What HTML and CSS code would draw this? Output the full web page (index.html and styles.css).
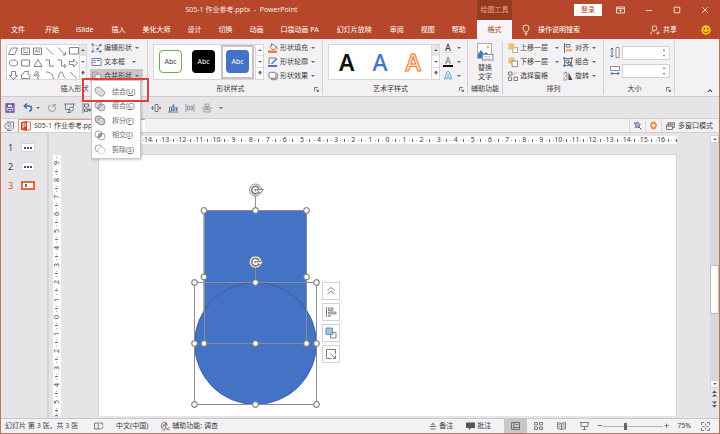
FILE: index.html
```html
<!DOCTYPE html>
<html lang="zh-CN">
<head>
<meta charset="utf-8">
<title>S05-1 作业参考.pptx - PowerPoint</title>
<link rel="stylesheet" href="styles.css">
</head>
<body>
<div class="window">
  <header class="titlebar">
    <div class="doc-title">S05-1 作业参考.pptx &nbsp;-&nbsp; PowerPoint</div>
    <div class="context-title">绘图工具</div>
    <div class="window-tools">
      <button class="login">登录</button>
      <button class="win-btn" aria-label="功能区显示选项"><svg width="9" height="8" viewBox="0 0 9 8"><path d="M.5 1h8v6h-8zM.5 2.7h8M4.500 6V4M3.300 5l1.200-1.200L5.700 5" class="w"/></svg></button>
      <button class="win-btn" aria-label="最小化"><svg width="8" height="8" viewBox="0 0 8 8"><path d="M1 4.500h6" class="w"/></svg></button>
      <button class="win-btn" aria-label="最大化"><svg width="8" height="8" viewBox="0 0 8 8"><path d="M1.200 1.200h5.600v5.600H1.200z" class="w"/></svg></button>
      <button class="win-btn" aria-label="关闭"><svg width="8" height="8" viewBox="0 0 8 8"><path d="M1 1l6 6M7 1L1 7" class="w"/></svg></button>
    </div>
  </header>

  <nav class="tabs">
    <div class="tab-list">
      <a href="#" class="file">文件</a><a href="#">开始</a><a href="#" class="latin">iSlide</a><a href="#">插入</a><a href="#">美化大师</a><a href="#">设计</a><a href="#">切换</a><a href="#">动画</a><a href="#" class="latin">口袋动画 PA</a><a href="#" class="latin">幻灯片放映</a><a href="#">审阅</a><a href="#">视图</a><a href="#">帮助</a>
    </div>
    <a href="#" class="active">格式</a>
    <div class="tab-tools">
      <button class="tell"><svg width="8" height="12" viewBox="0 0 8 12"><path d="M2.500 8C2.500 6.500 1 6 1 4a3 3 0 0 1 6 0c0 2-1.500 2.500-1.500 4zM2.700 9.500h2.600M3 11h2" class="w"/></svg>操作说明搜索</button>
      <button class="share"><svg width="10" height="10" viewBox="0 0 10 10"><circle cx="4.500" cy="3.200" r="2.400" class="w"/><path d="M.8 9.500c0-2.400 1.400-3.700 3.400-3.700M6.500 8h3M8 6.500v3" class="w"/></svg>共享</button>
      <svg class="smile" width="10" height="10" viewBox="0 0 10 10"><circle cx="5" cy="5" r="4.700" fill="#f7c60b"/><circle cx="3.300" cy="3.700" r=".8" fill="#5a3b12"/><circle cx="6.700" cy="3.700" r=".8" fill="#5a3b12"/><path d="M2.300 5.800c1 2.400 4.400 2.400 5.400 0" fill="none" stroke="#5a3b12" stroke-width=".8"/></svg>
    </div>
  </nav>

  <section class="ribbon">
    <div class="group g-insert">
      <div class="body">
        <div class="gallery shapes">
          <svg width="73" height="36" viewBox="0 0 73 36" class="shape-icons">
            <path d="M4.500 4h6l-3 6.500h-6zM14.500 4h8v6.500h-8zM26.500 4h8v6.500h-8zM39 3.500l7 7M51 3.500l7 7M58.500 8v3h-3M62.500 3.500h9v6.500h-9z"/>
            <path d="M16 6h2M16 8.500h5M19.500 6h1.500M31 6h2M31 8h2M28 8.500L29.500 5.500 30.500 8.500" class="blue"/>
            <ellipse cx="6.500" cy="19" rx="4.200" ry="3"/>
            <path d="M14.500 16h8v6h-8zM31 15.500l4 7h-8zM38.500 16h4v6h4.500M50.500 16h4v6h4.500M57 20l2 2-2 2M62.500 17.500h4V15l4 4-4 4v-2.500h-4z"/>
            <path d="M4.500 27.500h4v4h2L6.500 35.500 2.500 31.500h2zM14.500 34.500v-4l2-1 1-2h4c1 1-2 2-.500 3 2 0 2.500 1 1.500 4zM28 28c4-1 5 2 1 2s-2 3 1 1.500 3 1 0 2l2 1.500M39 28c5 0 7 3 7.500 7M50.500 34c2 0 1-6 3.500-6s2 6 4.500 6M63 28l7 6.500"/>
          </svg>
        </div>
        <div class="scroller"><button aria-label="上一行" disabled><i class="up"></i></button><button aria-label="下一行"><i class="dn"></i></button><button aria-label="更多形状"><i class="dn more"></i></button></div>
        <div class="rows">
          <button class="cmd"><svg width="11" height="10" viewBox="0 0 11 10"><path d="M2 2l7 1-2 3 2 3-7-1z" fill="none" stroke="#777" stroke-width=".7" stroke-dasharray="1.500 1"/><path d="M.5.5h2v2h-2zM8.500 1h2v2h-2zM.5 7.500h2v2h-2zM8.500 7.500h2v2h-2zM5.500 5h2v2h-2z" fill="#3d78b8"/></svg>编辑形状<i class="dn"></i></button>
          <button class="cmd"><svg width="11" height="10" viewBox="0 0 11 10"><path d="M1 1.500h9v7H1z" class="k" fill="#fff"/><path d="M2.500 3.500h2M2.500 5.500h2M6 3.500h2.500" stroke="#2f6fb2"/></svg>文本框<i class="dn wide"></i></button>
          <button class="cmd pressed"><svg width="11" height="10" viewBox="0 0 11 10"><circle cx="4.200" cy="4" r="3.200" class="g"/><circle cx="7" cy="6.200" r="3.200" class="g" fill="#eee"/></svg>合并形状<i class="dn"></i></button>
        </div>
      </div>
      <div class="caption">插入形状</div>
    </div>

    <div class="group g-style">
      <div class="body">
        <div class="gallery styles">
          <button class="swatch line">Abc</button><button class="swatch black">Abc</button><span class="frame"><button class="swatch blue">Abc</button></span>
        </div>
        <div class="scroller"><button aria-label="上一行"><i class="up"></i></button><button aria-label="下一行"><i class="dn"></i></button><button aria-label="更多样式"><i class="dn more"></i></button></div>
        <div class="rows">
          <button class="cmd"><svg width="10" height="10" viewBox="0 0 10 10"><path d="M2 3.500L5 1l3.500 3L5 7z" class="k" fill="#fff"/><path d="M3.500 3V.5M8 3.500c1 1 1.500 2 1 3" class="k"/><path d="M0 7.500h9v2.500H0z" fill="#ed7d31"/></svg>形状填充<i class="dn"></i></button>
          <button class="cmd"><svg width="10" height="10" viewBox="0 0 10 10"><path d="M1 7V1h7" class="k"/><path d="M3 6.500L8.500 1l1 1L4 7.200z" fill="#3d78c8"/><path d="M0 8h9v2H0z" fill="#4472c4"/></svg>形状轮廓<i class="dn"></i></button>
          <button class="cmd"><svg width="10" height="10" viewBox="0 0 10 10"><path d="M3 8.500h5L9.500 7V2.500" fill="none" stroke="#999" stroke-width="1.400"/><rect x="1" y="1.300" width="7" height="6" rx="1.500" fill="#fff" stroke="#666" stroke-width=".9"/></svg>形状效果<i class="dn"></i></button>
        </div>
      </div>
      <div class="caption">形状样式<button class="launch" aria-label="设置形状格式"><svg width="5" height="5" viewBox="0 0 5 5"><path d="M.5 4V.5H4M2 2l2.500 2.500M4.500 2.500v2h-2" class="k"/></svg></button></div>
    </div>

    <div class="group g-art">
      <div class="body">
        <div class="gallery arts">
          <button class="art">A</button><button class="art art-blue">A</button><button class="art art-orange">A</button>
        </div>
        <div class="scroller"><button aria-label="上一行" disabled><i class="up"></i></button><button aria-label="下一行"><i class="dn"></i></button><button aria-label="更多艺术字"><i class="dn more"></i></button></div>
        <div class="rows">
          <button class="cmd letter" aria-label="文本填充"><b class="fill">A</b><i class="dn"></i></button>
          <button class="cmd letter" aria-label="文本轮廓"><b class="outline">A</b><i class="dn"></i></button>
          <button class="cmd letter" aria-label="文本效果"><b class="effect">A</b><i class="dn"></i></button>
        </div>
      </div>
      <div class="caption">艺术字样式<button class="launch" aria-label="设置文本效果"><svg width="5" height="5" viewBox="0 0 5 5"><path d="M.5 4V.5H4M2 2l2.500 2.500M4.500 2.500v2h-2" class="k"/></svg></button></div>
    </div>

    <div class="group g-alt">
      <div class="body">
        <button class="big"><svg width="18" height="18" viewBox="0 0 18 18"><rect x="1.500" y=".5" width="14" height="15" fill="#fff" stroke="#aaa"/><circle cx="12" cy="4" r="1.600" fill="#f0c070"/><path d="M2 15V11l3-4 3 4 2-2 3 3v3z" fill="#3d7cc0"/><rect x="6.500" y="11.500" width="10.500" height="5.500" fill="#fff" stroke="#888"/><path d="M8 13.500h7M8 15.200h7" stroke="#aaa" stroke-width=".6"/></svg>替换<br>文字</button>
      </div>
      <div class="caption">辅助功能</div>
    </div>

    <div class="group g-arrange">
      <div class="body">
        <div class="rows">
          <button class="cmd"><svg width="10" height="10" viewBox="0 0 10 10"><path d="M4.500 4.500h5v5h-5z" fill="#fff" stroke="#999" stroke-width=".8"/><path d="M.5.5h6v6h-6z" fill="#f0c074"/></svg>上移一层<i class="dn wide"></i></button>
          <button class="cmd"><svg width="10" height="10" viewBox="0 0 10 10"><path d="M.5.5h6v6h-6z" fill="#f0c074"/><path d="M4 4h5.500v5.500H4z" fill="#fff" stroke="#777" stroke-width=".8"/></svg>下移一层<i class="dn wide"></i></button>
          <button class="cmd"><svg width="10" height="10" viewBox="0 0 10 10"><path d="M.5 1h3.500v3H.5zM6 6h3.500v3.500H6zM.5 6h3v3.500h-3z" class="k"/><path d="M5 4.500L8.500 1l1 1M4.500 7.500L2 5" fill="none" stroke="#e0a850"/></svg>选择窗格</button>
        </div>
        <div class="rows">
          <button class="cmd"><svg width="10" height="10" viewBox="0 0 10 10"><path d="M1.500 0v10" stroke="#3d78b8"/><path d="M3 1.500h4v2.500H3z" class="k"/><path d="M3 6h6v2.500H3z" fill="#f0b464"/></svg>对齐<i class="dn"></i></button>
          <button class="cmd"><svg width="10" height="10" viewBox="0 0 10 10"><path d="M1.500 1.500h7v7h-7zM3 3h3v3H3zM5 5h2.500v2.500H5z" class="k"/><path d="M.3.300h2v2h-2zM7.700.300h2v2h-2zM.3 7.700h2v2h-2zM7.700 7.700h2v2h-2z" fill="#3d78b8"/></svg>组合<i class="dn"></i></button>
          <button class="cmd"><svg width="10" height="10" viewBox="0 0 10 10"><path d="M5.500 1.500v7.500h4z" fill="#444"/><path d="M4 9H.5L4 2.500z" class="g"/><path d="M1 3.500c0-2 1.500-2.700 3-2" fill="none" stroke="#3d78b8"/></svg>旋转<i class="dn"></i></button>
        </div>
      </div>
      <div class="caption">排列</div>
    </div>

    <div class="group g-size">
      <div class="body">
        <label class="size"><svg width="10" height="11" viewBox="0 0 10 11"><path d="M2 1v9M.5 2.500L2 1l1.500 1.500M.5 8.500L2 10l1.500-1.500" stroke="#3d78b8" fill="none"/><path d="M6 .5h3v10H6z" fill="#fff" stroke="#777" stroke-width=".8"/></svg><input type="text" aria-label="高度"><span class="spin"><i class="up"></i><i class="dn"></i></span></label>
        <label class="size"><svg width="10" height="11" viewBox="0 0 10 11"><path d="M1 8.500h8M2.500 7L1 8.500 2.500 10M7.500 7L9 8.500 7.500 10" stroke="#3d78b8" fill="none"/><path d="M.5 1.500h9v4h-9z" fill="#fff" stroke="#777" stroke-width=".8"/></svg><input type="text" aria-label="宽度"><span class="spin"><i class="up"></i><i class="dn"></i></span></label>
      </div>
      <div class="caption">大小<button class="launch" aria-label="大小和位置"><svg width="5" height="5" viewBox="0 0 5 5"><path d="M.5 4V.5H4M2 2l2.500 2.500M4.500 2.500v2h-2" class="k"/></svg></button></div>
    </div>
    <button class="collapse" aria-label="折叠功能区"><svg width="6" height="5" viewBox="0 0 6 5"><path d="M1 4l2-2.200L5 4" fill="none" stroke="#444" stroke-width="1.100"/></svg></button>
  </section>

  <div class="quick">
    <button aria-label="保存"><svg width="10" height="10" viewBox="0 0 10 10"><path d="M1 1h8v8H1z" fill="none" stroke="#6b4a9a" stroke-width="1.300"/><path d="M2.500 1v3.500h5V1M3 9V6.500h4V9" fill="none" stroke="#6b4a9a"/></svg></button>
    <button class="undo" aria-label="撤消"><svg width="10" height="9" viewBox="0 0 10 9"><path d="M1.500 3h4.500c3.500 0 3.500 5 0 5M4 .5L1.300 3 4 5.500" fill="none" stroke="#3a6fa8" stroke-width="1.500"/></svg><i class="dn"></i></button>
    <button aria-label="恢复"><svg width="10" height="10" viewBox="0 0 10 10"><path d="M3.500 1.800a3.500 3.500 0 1 0 3 0M6 4.200V1.500h3" fill="none" stroke="#aaa" stroke-width="1.200"/></svg></button>
    <button aria-label="从头开始"><svg width="11" height="10" viewBox="0 0 11 10"><path d="M0 1h11M1.500 1v5.500h4M9.500 1v3M3 9.500h4M5 6.500v3" class="k"/><circle cx="7.500" cy="6" r="2" fill="#eee" stroke="#4b83b4"/></svg></button>
    <button class="last" aria-label="对齐对象"><svg width="9" height="10" viewBox="0 0 9 10"><path d="M1 0v10M2.500 1h4v3h-4zM2.500 6h3v2.500h-3zM5 7h3.500" class="k"/><path d="M5 6.500L8.500 5v4z" fill="#3d78b8"/></svg></button>
    <button aria-label="水平居中"><svg width="10" height="10" viewBox="0 0 10 10"><path d="M4 1.500h3v7H4zM0 5h3M8 5h2M1.500 3v4M9 3.500v3" class="k"/></svg></button>
    <button aria-label="底端对齐"><svg width="10" height="10" viewBox="0 0 10 10"><path d="M0 9h10M1.500 4h2v4h-2z" class="k"/><path d="M4.500 1.500h2V8h-2zM7.500 4h2v4h-2z" fill="#4f86bd"/></svg></button>
    <button aria-label="横向分布"><svg width="10" height="10" viewBox="0 0 10 10"><path d="M1 1v8M9 1v8M2.500 3h2v4h-2zM6 3h1.500v4H6z" class="g"/></svg></button>
    <button aria-label="纵向分布"><svg width="10" height="10" viewBox="0 0 10 10"><path d="M0 5h10M3 1h4v2.500H3zM2 6.500h6V9H2zM5 3.500v3" class="g"/></svg></button>
    <button aria-label="自定义快速访问工具栏"><i class="dn"></i></button>
  </div>

  <div class="docbar">
    <button class="history" aria-label="文档"><svg width="11" height="10" viewBox="0 0 11 10"><path d="M3 1h6.500v6L7 9.500H3" class="k"/><circle cx="4" cy="5" r="3.200" fill="#f3f1f4" stroke="#777" stroke-width=".8"/><path d="M4 3v2.200h1.700" class="k"/></svg></button>
    <a href="#" class="doc"><svg width="10" height="10" viewBox="0 0 10 10"><path d="M5 1h4.500v8H5z" fill="#fff" stroke="#c8502f" stroke-width=".8"/><path d="M0 1l6-1v10L0 9z" fill="#d04423"/><path d="M2 7.500v-5h1.300c1.800 0 1.800 2.700 0 2.700H2" fill="none" stroke="#fff" stroke-width=".9"/></svg>S05-1 作业参考.pptx</a>
    <div class="doc-tools">
      <button aria-label="魔法棒"><svg width="9" height="9" viewBox="0 0 9 9"><path d="M1.500 1.500l2 .5L5 .8l.5 2 2 .7-1.500 1.500.3 1.800-2-.8-2 .8.3-2z" fill="#b8a8e0" stroke="#6954a8" stroke-width=".8"/><path d="M5.500 5.500l3 3" stroke="#555"/></svg></button>
      <button aria-label="设置"><svg width="9" height="9" viewBox="0 0 9 9"><path d="M2.700.8h3.600l1.900 3.700-1.900 3.700H2.700L.8 4.500z" fill="#ec8c3c"/><circle cx="4.500" cy="4.500" r="1.700" fill="#f3f1f4"/></svg></button>
      <button class="multi"><svg width="9" height="8" viewBox="0 0 9 8"><path d="M.5 3h6v4.500h-6zM.5 4.200h6M2 3V.8h6.500V5.500h-2M2 2h6.500" class="k"/></svg>多窗口模式</button>
    </div>
  </div>

  <main class="work">
    <ol class="thumbs">
      <li><span>1</span><a href="#" class="thumb" aria-label="幻灯片 1"><i></i><i></i><i></i></a></li>
      <li><span>2</span><a href="#" class="thumb" aria-label="幻灯片 2"><i></i><i></i><i></i></a></li>
      <li class="sel"><span>3</span><a href="#" class="thumb" aria-label="幻灯片 3"><i></i></a></li>
    </ol>
    <div class="vruler"><span>9</span><span>8</span><span>7</span><span>6</span><span>5</span><span>4</span><span>3</span><span>2</span><span>1</span><span>0</span><span>1</span><span>2</span><span>3</span><span>4</span><span>5</span><span class="end"></span></div>
    <div class="stage">
      <div class="hruler"><span class="end"></span><span></span><span></span><span>14</span><span>13</span><span>12</span><span>11</span><span>10</span><span>9</span><span>8</span><span>7</span><span>6</span><span>5</span><span>4</span><span>3</span><span>2</span><span>1</span><span>0</span><span>1</span><span>2</span><span>3</span><span>4</span><span>5</span><span>6</span><span>7</span><span>8</span><span>9</span><span>10</span><span>11</span><span>12</span><span>13</span><span>14</span><span>15</span><span>16</span><span class="end"></span></div>
      <div class="slide">
        <svg class="drawing" width="240" height="262" viewBox="99 155 240 262">
          <defs>
            <g id="rot"><circle r="6" fill="#fff" stroke="#8a8a8a"/><path d="M3.400 1.800A3.800 3.800 0 1 1 3.600-1.200" fill="none" stroke="#777" stroke-width="1.600"/><path d="M1.500-.5H8L4.800 3.300z" fill="#fff" stroke="#777" stroke-width=".9"/><circle r="1.200" fill="#888"/></g>
            <circle id="h" r="2.800" fill="#fff" stroke="#85858a" stroke-width="1.200"/>
          </defs>
          <rect x="204" y="210.500" width="102.500" height="132.500" fill="#4472c4" stroke="#2f528f" stroke-width=".8"/>
          <circle cx="255.500" cy="343.500" r="61" fill="#4472c4" stroke="#34599c" stroke-width=".8"/>
          <g fill="none" stroke="#8c8c94"><rect x="204.500" y="210.500" width="102" height="133"/><rect x="194.500" y="282.500" width="122" height="122"/><path d="M255.500 196v12M255.500 268v12"/></g>
          <use href="#rot" x="255.500" y="190"/><use href="#rot" x="255.500" y="262"/>
          <use href="#h" x="204" y="210.500"/><use href="#h" x="255.500" y="210.500"/><use href="#h" x="306.500" y="210.500"/>
          <use href="#h" x="204" y="277"/><use href="#h" x="306.500" y="277"/>
          <use href="#h" x="204" y="343.500"/><use href="#h" x="255.500" y="343.500"/><use href="#h" x="306.500" y="343.500"/>
          <use href="#h" x="194.500" y="282.500"/><use href="#h" x="255.500" y="282.500"/><use href="#h" x="316.500" y="282.500"/>
          <use href="#h" x="194.500" y="343.500"/><use href="#h" x="316.500" y="343.500"/>
          <use href="#h" x="194.500" y="404.500"/><use href="#h" x="255.500" y="404.500"/><use href="#h" x="316.500" y="404.500"/>
        </svg>
        <div class="mini">
          <button aria-label="收起"><svg width="10" height="10" viewBox="0 0 10 10"><path d="M1.500 4.500L5 1.500l3.500 3M1.500 8L5 5l3.500 3" class="k"/></svg></button>
          <button aria-label="对齐"><svg width="12" height="12" viewBox="0 0 12 12"><path d="M1.500 1v10" class="k"/><path d="M3.500 2h4.500v2.500H3.500zM3.500 6h7.500v2H3.500z" fill="#ccc" stroke="#777" stroke-width=".8"/><path d="M3.500 10H6M4.500 9l-1 1 1 1" class="k"/></svg></button>
          <button aria-label="层次"><svg width="12" height="12" viewBox="0 0 12 12"><path d="M6 5.500h5v5.500H5.500V6" class="k"/><path d="M1 1h6.500v6.500H1z" fill="#9cc3dc" stroke="#6d8fa5"/></svg></button>
          <button aria-label="大小"><svg width="12" height="12" viewBox="0 0 12 12"><path d="M10.500 6V1.500h-9v9H6M5.500 5.500l5 5M10.500 7.500v3h-3" class="k"/></svg></button>
        </div>
      </div>
    </div>
    <div class="vscroll">
      <button aria-label="向上滚动"><i class="up"></i></button>
      <div class="track"><div class="thumb-bar"></div></div>
      <button aria-label="向下滚动"><i class="dn"></i></button>
      <button class="page" aria-label="上一张"><svg width="5" height="7" viewBox="0 0 5 7"><path d="M0 3L2.500.5 5 3zM0 6.500L2.500 4 5 6.500z" fill="#555"/></svg></button>
      <button class="page" aria-label="下一张"><svg width="5" height="7" viewBox="0 0 5 7"><path d="M0 .5h5L2.500 3zM0 4h5L2.500 6.500z" fill="#555"/></svg></button>
    </div>
  </main>

  <footer class="status">
    <span class="count">幻灯片 第 3 张，共 3 张</span>
    <svg width="10" height="8" viewBox="0 0 10 8"><path d="M.5 1h3.700v6H.5zM4.200 7h2M5 1h3.500v2.500M6.500 6l1 1L9.500 4.500" class="k"/></svg>
    <span>中文(中国)</span>
    <span class="acc"><svg width="10" height="10" viewBox="0 0 10 10"><path d="M5.500 1.200A3.900 3.900 0 1 0 5 9M4.500 3.500l-2 3M3 4h5M5.500 4.500v2L4 9M6 6.500L9.500 9.500M6 9.500L9.500 6" class="k"/><circle cx="6" cy="2.500" r="1" fill="#555"/></svg>辅助功能: 调查</span>
    <div class="status-right">
      <button class="note"><svg width="8" height="8" viewBox="0 0 8 8"><path d="M.5 4.500h7M1.500 7h5M2.500 2.800L4 1l1.500 1.800z" class="k"/></svg>备注</button>
      <button class="note"><svg width="9" height="8" viewBox="0 0 9 8"><path d="M0 .5h9v5.500H5L3 8V6H0z" fill="#555"/></svg>批注</button>
      <button class="view on" aria-label="普通视图"><svg width="9" height="8" viewBox="0 0 9 8"><path d="M.5.5h8v7h-8zM2.800.5v7M2.800 5.500h5.700M4.500 2.500h2.500" class="k"/></svg></button>
      <button class="view" aria-label="幻灯片浏览"><svg width="9" height="8" viewBox="0 0 9 8"><path d="M.5.500h3v2.500h-3zM5.500.500h3v2.500h-3zM.5 5h3v2.500h-3zM5.500 5h3v2.500h-3z" class="k"/></svg></button>
      <button class="view" aria-label="阅读视图"><svg width="9" height="8" viewBox="0 0 9 8"><path d="M4.500 1.500L.5.500v6l4 1 4-1v-6zM4.500 1.500v6M1.500 2.500l2 .5M1.500 4.500l2 .5M5.500 3l2-.5M5.500 5l2-.5" class="k"/></svg></button>
      <button class="view" aria-label="幻灯片放映"><svg width="9" height="8" viewBox="0 0 9 8"><path d="M0 .5h9M1 .500v4h7v-4M4.500 4.500v3M2.500 7.500h4" class="k"/></svg></button>
      <button class="zoom-step" aria-label="缩小">−</button>
      <input type="range" min="0" max="100" value="36" aria-label="缩放">
      <button class="zoom-step" aria-label="放大">+</button>
      <span class="pct">75%</span>
      <button class="fit" aria-label="适应窗口"><svg width="9" height="9" viewBox="0 0 9 9"><path d="M.5 3V.5H3M6 .5h2.500V3M8.500 6v2.500H6M3 8.500H.5V6M4.500 1.500v2M4.500 5.500v2M1.500 4.500h2M5.500 4.500h2" class="k"/></svg></button>
    </div>
  </footer>

  <div class="menu" role="menu">
    <button role="menuitem"><svg width="12" height="11" viewBox="0 0 12 11"><path d="M1 4a3.200 3.200 0 0 1 5-2.500l4 3.500a3.200 3.200 0 0 1-4 4.800L2 6.800A3.200 3.200 0 0 1 1 4z" fill="#ddd" stroke="#888" stroke-width=".8"/></svg><span>结合(<u>U</u>)</span></button>
    <button role="menuitem"><svg width="12" height="11" viewBox="0 0 12 11"><circle cx="4.500" cy="4.300" r="3.500" class="g" fill="#ddd"/><circle cx="7.500" cy="6.500" r="3.500" class="g" fill="#ddd"/><path d="M4.200 6.500A3.500 3.500 0 0 1 7.800 3.800 3.500 3.500 0 0 1 4.200 6.800z" fill="#fff" stroke="#777" stroke-width=".7"/></svg><span>组合(<u>C</u>)</span></button>
    <button role="menuitem"><svg width="12" height="11" viewBox="0 0 12 11"><circle cx="4.500" cy="4.300" r="3.500" fill="#ccc" stroke="#777" stroke-width=".8"/><circle cx="7.500" cy="6.500" r="3.500" fill="#ccc" stroke="#777" stroke-width=".8"/><path d="M4.200 6.500A3.500 3.500 0 0 1 7.800 3.800 3.500 3.500 0 0 1 4.200 6.800z" fill="#aaa" stroke="#fff" stroke-width=".7"/></svg><span>拆分(<u>F</u>)</span></button>
    <button role="menuitem"><svg width="12" height="11" viewBox="0 0 12 11"><circle cx="4.500" cy="4.300" r="3.500" class="g"/><circle cx="7.500" cy="6.500" r="3.500" class="g"/><path d="M4.200 6.500A3.500 3.500 0 0 1 7.800 3.800 3.500 3.500 0 0 1 4.200 6.800z" fill="#bbb" stroke="#666" stroke-width=".7"/></svg><span>相交(<u>I</u>)</span></button>
    <button role="menuitem"><svg width="12" height="11" viewBox="0 0 12 11"><circle cx="7.500" cy="6.500" r="3.500" class="g" stroke-dasharray="1 1"/><path d="M4.200 7.800A3.500 3.500 0 1 1 8 3.300" class="g"/></svg><span>剪除(<u>S</u>)</span></button>
  </div>
  <div class="highlight"></div>
</div>
</body>
</html>
```
FILE: styles.css
```css
* { box-sizing: border-box; }
body {
  margin: 0;
  font: 7px/10px "Noto Sans", "Noto Sans CJK SC", sans-serif;
  color: #3c3c3c;
}
button, input { font: inherit; color: inherit; margin: 0; padding: 0; border: 0; background: none; }
a { color: inherit; text-decoration: none; white-space: nowrap; }
button { display: flex; align-items: center; white-space: nowrap; }
svg { display: block; flex: none; }
.w { fill: none; stroke: #fbe9e4; stroke-width: .9; }
path.k { stroke: #606060; stroke-width: .8; }
path.k:not([fill]) { fill: none; }
.g { stroke: #8a8a8a; stroke-width: .8; }
.g:not([fill]) { fill: none; }

.up, .dn { display: block; border: 2px solid transparent; width: 0; height: 0; }
.dn { border-top-color: #666; border-bottom-width: 0; }
.up { border-bottom-color: #666; border-top-width: 0; }
.more { border-top-width: 3px; box-shadow: 0 -2px 0 -1px #666; }

.window {
  position: relative;
  display: flex;
  flex-direction: column;
  min-height: 100vh;
  background: #e6e4e7;
}
.window::after {
  content: "";
  position: absolute;
  inset: 39px 0 0;
  border: 1px solid #c27360;
  border-top: 0;
  pointer-events: none;
}

.titlebar { display: flex; height: 20px; background: #b7472a; color: #fbe9e4; }
.doc-title { flex: 1; display: flex; align-items: center; justify-content: center; padding-left: 6px; white-space: nowrap; }
.context-title { width: 35px; background: #963a20; color: #f0a58e; display: flex; align-items: center; justify-content: center; white-space: nowrap; }
.window-tools { width: 208px; display: flex; align-items: center; justify-content: flex-end; gap: 20px; padding-right: 11px; }
.login { width: 28px; height: 12px; margin-right: -6px; justify-content: center; background: #fff; color: #b7472a; }

.tabs { display: flex; height: 19px; background: #b7472a; color: #fff; }
.tab-list { flex: 1; display: flex; align-items: center; gap: 17px; padding-left: 11px; }
.file { padding-right: 3px; }
.latin { padding-right: 1px; }
.active { width: 35px; background: #f6f4f6; color: #b7472a; display: flex; align-items: center; justify-content: center; }
.tab-tools { width: 208px; display: flex; align-items: center; padding: 0 9px 0 10px; }
.tell { gap: 8px; }
.share { gap: 3px; margin-left: auto; }
.smile { margin-left: 24px; }

.ribbon { display: flex; height: 58px; background: #f3f1f4; border-bottom: 1px solid #cfccd0; }
.group { display: flex; flex-direction: column; border-right: 1px solid #d2d0d3; margin: 2px 0 2px; padding: 0 4px 0 5px; }
.body { display: flex; height: 41px; align-items: center; }
.caption { display: flex; flex: 1; align-items: flex-end; justify-content: center; white-space: nowrap; }
.launch { position: absolute; right: -1px; bottom: 2px; }
.group:has(.launch) .caption { position: relative; padding-right: 10px; }
.gallery { height: 36px; background: #fff; border: 1px solid #d8d6d9; border-right: 0; display: flex; align-items: center; }
.scroller { width: 9px; height: 36px; display: flex; flex-direction: column; background: #fff; border: 1px solid #d8d6d9; }
.scroller button { flex: 1; justify-content: center; border-bottom: 1px solid #e3e1e4; }
.scroller button:last-child { border-bottom: 0; }
.scroller button:disabled { background: #e6e4e7; }
.rows { display: flex; flex-direction: column; gap: 1px; }
.cmd { height: 13px; gap: 2px; }
.cmd .dn { margin-left: 1px; }
.cmd .wide { margin-left: 5px; }
.pressed { background: #c8c6c9; }

.g-insert { width: 148px; padding-left: 6px; }
.shapes { width: 73px; }
.shape-icons { fill: none; stroke: #666; stroke-width: .8; }
.shape-icons .blue { stroke: #3d78b8; }
.g-insert .rows { margin-left: 3px; }
.g-insert .cmd { padding: 0 4px 0 1px; }

.g-style { width: 175px; }
.styles { width: 102px; padding-left: 5px; gap: 10px; }
.swatch { width: 23px; height: 23px; flex: none; justify-content: center; border-radius: 4px; }
.line { background: #fff; border: 1px solid #70ad47; }
.black { background: #000; color: #fff; }
.blue { background: #4472c4; color: #fff; }
.frame { display: flex; align-items: center; justify-content: center; width: 33px; height: 34px; margin-left: -4px; border: 2px solid #c4c2c5; }
.g-style .rows { margin-left: 4px; }

.g-art { width: 145px; }
.arts { width: 103px; justify-content: space-around; padding: 0 1px; }
.art { font: 600 23px/30px "Noto Sans", sans-serif; color: #111; }
.art-blue { color: #4472c4; font-weight: 500; }
.art-orange { color: #fbe1d0; -webkit-text-stroke: 1px #ed7d31; }
.g-art .rows { margin-left: 3px; }
.letter { gap: 3px; }
.letter b { width: 10px; font-size: 9px; line-height: 9px; text-align: center; font-weight: 500; }
.fill { border-bottom: 1px solid #ddd; }
.outline { color: #888; border-bottom: 2px solid #111; }
.effect { color: #fff; text-shadow: 1px 0 #4a92cc, -1px 0 #4a92cc, 0 1px #4a92cc, 0 -1px #4a92cc; }

.g-alt { width: 35px; padding: 0; }
.g-alt .body { justify-content: center; }
.big { flex-direction: column; line-height: 9px; gap: 2px; }
.g-arrange { width: 101px; }
.g-arrange .rows + .rows { margin-left: 4px; }
.g-size { width: 71px; }
.g-size .body { flex-direction: column; justify-content: center; gap: 4px; }
.size { display: flex; align-items: center; gap: 2px; width: 60px; }
.size input { flex: 1; min-width: 0; height: 14px; background: #fff; border: 1px solid #d2d0d3; padding: 0 9px 0 2px; }
.spin { margin-left: -9px; width: 7px; display: flex; flex-direction: column; gap: 4px; }
.spin .up, .spin .dn { border-left-width: 1px; border-right-width: 1px; }
.collapse { margin-left: auto; align-self: flex-end; padding: 0 7px 3px 0; }

.quick { display: flex; align-items: center; height: 21px; padding: 0 5px; gap: 7px; }
.quick button { justify-content: center; }
.quick .undo { gap: 3px; margin-left: 1px; }
.quick .last { margin-right: 53px; }

.docbar { display: flex; height: 15px; background: #f3f1f4; border: solid #d2d0d3; border-width: 1px 0; }
.history { width: 18px; padding-left: 4px; }
.doc { display: flex; align-items: center; gap: 3px; width: 127px; padding-left: 2px; background: #fff; border: 1px solid #e29a83; border-width: 1px 0 0 1px; }
.doc-tools { margin-left: auto; display: flex; padding-right: 7px; }
.doc-tools button { justify-content: center; width: 16px; border-left: 1px solid #d8d6d9; }
.doc-tools .multi { width: auto; gap: 3px; padding-left: 4px; }

.work { flex: 1; display: flex; min-height: 286px; border-bottom: 1px solid #c9c7ca; overflow: hidden; }
.thumbs { list-style: none; margin: 0; padding: 5px 0 0 8px; width: 49px; border-right: 2px solid #d6d4d7; }
.thumbs li { display: flex; align-items: center; height: 19px; gap: 7px; font-size: 9px; }
.thumbs li span { width: 6px; }
.thumb { display: flex; align-items: center; justify-content: center; gap: 1px; width: 14px; height: 9px; border: 1px solid #d0d6dc; background: #fff; }
.thumb i { width: 2px; height: 2px; background: #35566f; }
.sel { color: #d9532f; }
.sel .thumb { border: 2px solid #e8663f; justify-content: flex-start; padding-left: 2px; }
.sel .thumb i { height: 3px; background: #4472c4; }

.hruler, .vruler { display: flex; background: #fff; }
.hruler span, .vruler span {
  flex: 1 1 0;
  min-width: 0;
  min-height: 0;
  display: flex;
  align-items: center;
  justify-content: center;
  background-repeat: no-repeat;
  background-image: linear-gradient(#666, #666), linear-gradient(#aaa, #aaa), linear-gradient(#aaa, #aaa);
}
.hruler { height: 8px; }
.hruler span { background-size: 1px 3px, 1px 1px, 1px 1px; background-position: 100% 50%, 20% 50%, 80% 50%; }
.hruler .end { flex-grow: .43; }
.vruler { flex-direction: column; width: 8px; margin: 22px 0 2px 4px; }
.vruler span { writing-mode: vertical-rl; transform: rotate(180deg); background-size: 3px 1px, 1px 1px, 1px 1px; background-position: 50% 0, 50% 15%, 50% 85%; }
.vruler .end { flex-grow: .3; }

.stage { flex: 1; min-width: 0; display: flex; flex-direction: column; padding: 3px 33px 2px 37px; gap: 10px; }
.slide { position: relative; flex: 1; background: #fff; border: 1px solid #d4d2d5; border-bottom: 0; }
.drawing { position: absolute; left: 0; top: 0; }
.mini { position: absolute; left: 223px; top: 127px; display: flex; flex-direction: column; gap: 3px; }
.mini button { width: 18px; height: 18px; justify-content: center; background: #fff; border: 1px solid #d4d2d8; }

.vscroll { width: 10px; padding: 2px 1px 8px 0; display: flex; flex-direction: column; background: #e6e4e7; }
.vscroll button { height: 8px; justify-content: center; background: #fff; border: 1px solid #d2d0d3; }
.vscroll .page { height: 11px; background: none; border: 0; }
.track { flex: 1; display: flex; flex-direction: column; background: #d9d7da; padding-top: 122px; }
.thumb-bar { height: 49px; background: #fff; border: 1px solid #bbb; }

.status { display: flex; align-items: center; height: 15px; padding: 0 10px 1px 5px; background: #f3f1f4; gap: 12px; white-space: nowrap; }
.count { padding-right: 4px; }
.acc { display: flex; align-items: center; gap: 2px; }
.status-right { margin-left: auto; display: flex; align-items: center; align-self: stretch; }
.note { gap: 2px; margin-right: 13px; }
.view { width: 23px; height: 14px; justify-content: center; }
.on { background: #c8c6c9; }
.zoom-step { width: 7px; justify-content: center; font-size: 9px; }
.status input { appearance: none; width: 60px; height: 9px; background: linear-gradient(#b5b3b6, #b5b3b6) center / 100% 1px no-repeat; }
.status input::-webkit-slider-thumb { appearance: none; width: 3px; height: 7px; background: #666; }
.pct { margin: 0 10px 0 7px; }

.menu {
  position: absolute;
  left: 91px;
  top: 80px;
  width: 50px;
  padding: 3px 1px 1px;
  display: flex;
  flex-direction: column;
  background: #fff;
  border: 1px solid #c9c7ca;
  box-shadow: 1px 1px 2px #0003;
}
.menu button { height: 15px; padding-left: 1px; gap: 6px; color: #666; }
.menu button:nth-child(even) { height: 14px; }
.highlight { position: absolute; left: 82px; top: 78px; width: 67px; height: 24px; border: 2px solid #e0403c; pointer-events: none; }
```
